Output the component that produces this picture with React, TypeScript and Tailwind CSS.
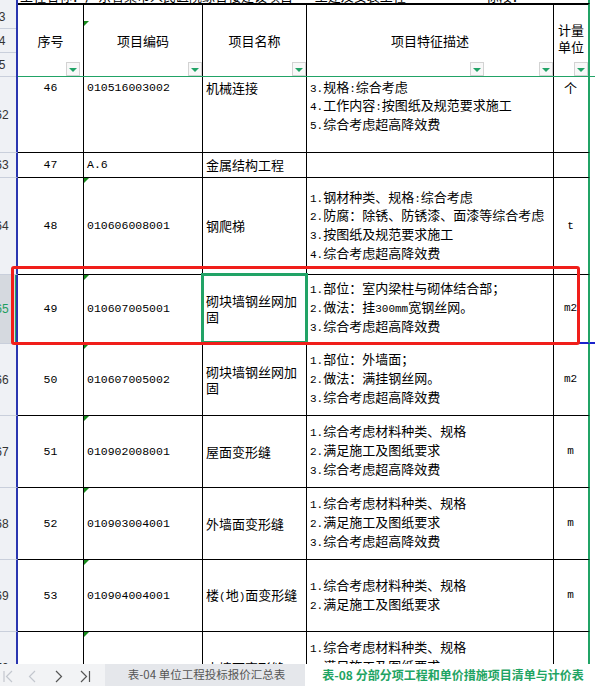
const rows = [
  {
    r: 62,
    no: "46",
    code: "010516003002",
    name: "机械连接",
    desc: ["1.钢筋种类:综合考虑", "2.连接方式:直螺纹连接", "3.规格:综合考虑", "4.工作内容:按图纸及规范要求施工", "5.综合考虑超高降效费"],
    unit: "个",
    h: "h-[129px] -mt-[53px]",
    lab: "pt-[53px]",
    mark: false,
  },
  { r: 63, no: "47", code: "A.6", name: "金属结构工程", desc: [], unit: "", h: "h-[25px]", lab: "", mark: false },
  {
    r: 64,
    no: "48",
    code: "010606008001",
    name: "钢爬梯",
    desc: ["1.钢材种类、规格:综合考虑", "2.防腐：除锈、防锈漆、面漆等综合考虑", "3.按图纸及规范要求施工", "4.综合考虑超高降效费"],
    unit: "t",
    h: "h-[97px]",
    lab: "",
    mark: true,
  },
  {
    r: 65,
    no: "49",
    code: "010607005001",
    name: "砌块墙钢丝网加固",
    desc: ["1.部位：室内梁柱与砌体结合部；", "2.做法：挂300mm宽钢丝网。", "3.综合考虑超高降效费"],
    unit: "m2",
    h: "h-[69px]",
    lab: "",
    mark: true,
  },
  {
    r: 66,
    no: "50",
    code: "010607005002",
    name: "砌块墙钢丝网加固",
    desc: ["1.部位：外墙面；", "2.做法：满挂钢丝网。", "3.综合考虑超高降效费"],
    unit: "m2",
    h: "h-[72px]",
    lab: "",
    mark: true,
  },
  {
    r: 67,
    no: "51",
    code: "010902008001",
    name: "屋面变形缝",
    desc: ["1.综合考虑材料种类、规格", "2.满足施工及图纸要求", "3.综合考虑超高降效费"],
    unit: "m",
    h: "h-[72px]",
    lab: "",
    mark: true,
  },
  {
    r: 68,
    no: "52",
    code: "010903004001",
    name: "外墙面变形缝",
    desc: ["1.综合考虑材料种类、规格", "2.满足施工及图纸要求", "3.综合考虑超高降效费"],
    unit: "m",
    h: "h-[72px]",
    lab: "",
    mark: true,
  },
  {
    r: 69,
    no: "53",
    code: "010904004001",
    name: "楼(地)面变形缝",
    desc: ["1.综合考虑材料种类、规格", "2.满足施工及图纸要求"],
    unit: "m",
    h: "h-[72px]",
    lab: "",
    mark: true,
  },
  {
    r: 70,
    no: "54",
    code: "010903004002",
    name: "内墙面变形缝",
    desc: ["1.综合考虑材料种类、规格", "2.满足施工及图纸要求", "3.综合考虑超高降效费"],
    unit: "m",
    h: "h-[72px]",
    lab: "",
    mark: true,
  },
];

// half-width runs are drawn narrow, the way SimSun renders them
function Txt({ s }: { s: string }) {
  return (
    <>
      {s.split(/([\x20-\x7e]+)/).map((p, i) =>
        /[\x20-\x7e]/.test(p) ? (
          <span key={i} className="font-['Liberation_Mono',monospace] text-[11px]">
            {p}
          </span>
        ) : (
          p
        )
      )}
    </>
  );
}

function Marker() {
  return (
    <span className="absolute left-0 top-0 h-0 w-0 border-r-[5px] border-t-[5px] border-r-transparent border-t-[#178a1c]" />
  );
}

function Filter({ pos }: { pos: string }) {
  return (
    <span className={`absolute bottom-0 flex h-[14px] w-[14px] items-center justify-center border border-[#d3d3d3] bg-[#f8f8f8] ${pos}`}>
      <span className="mt-[1px] h-0 w-0 border-l-[4px] border-r-[4px] border-t-[4px] border-l-transparent border-r-transparent border-t-[#21a366]" />
    </span>
  );
}

function RowLabel({ n, cls }: { n: string; cls?: string }) {
  return <span className={`-ml-[13px] block w-[30px] shrink-0 text-center ${cls ?? ""}`}>{n}</span>;
}

function SheetRow({ row }: { row: (typeof rows)[0] }) {
  const sel = row.r === 65;
  const b = sel ? "border-b-2 border-b-[#1a22cc]" : "border-b border-b-black";
  return (
    <div className={`flex shrink-0 ${row.h}`}>
      <div
        className={`flex w-[18px] shrink-0 items-center overflow-hidden border-b border-r-2 border-b-[#c9cfdb] border-r-[#2a36b0] font-['Liberation_Sans',sans-serif] text-[12px] ${
          sel ? "bg-[#d5d9df] text-[#1e9e5e] shadow-[inset_-1px_0_0_#21a366]" : "bg-[#eff1f5] text-[#333]"
        } ${row.lab}`}
      >
        <RowLabel n={String(row.r)} />
      </div>
      <div className={`flex w-[66px] shrink-0 items-center justify-center border-r border-r-black font-['Liberation_Mono',monospace] text-[11.5px] ${b}`}>
        {row.no}
      </div>
      <div className={`relative flex w-[119px] shrink-0 items-center border-r border-r-black pl-[3px] font-['Liberation_Mono',monospace] text-[11.5px] ${b}`}>
        {row.mark && <Marker />}
        {row.code}
      </div>
      <div className={`relative flex w-[104px] shrink-0 items-center border-r border-r-black pl-[3px] pr-[4px] text-[13px] leading-[16px] ${b}`}>
        <span>
          <Txt s={row.name} />
        </span>
        {sel && <span className="absolute -bottom-[2px] -left-[2px] -right-[2px] -top-[2px] border-[3px] border-[#21a366]" />}
      </div>
      <div className={`flex w-[247px] shrink-0 flex-col justify-center whitespace-nowrap border-r border-r-black pl-[3px] text-[13px] leading-[16.7px] ${b}`}>
        {row.desc.map((d) => (
          <div key={d}>
            <Txt s={d} />
          </div>
        ))}
      </div>
      <div className={`flex w-[36px] shrink-0 items-center justify-center border-r-2 border-r-[#21a366] pr-[1px] text-[13px] ${b}`}>
        <Txt s={row.unit} />
      </div>
      <div className={`flex-1 ${sel ? "border-b-2 border-b-[#1a22cc]" : ""}`} />
    </div>
  );
}

export default function App() {
  return (
    <div className="relative flex h-[686px] w-[595px] flex-col overflow-hidden bg-white font-['Noto_Sans_CJK_SC',sans-serif] text-black">
      {/* frozen header */}
      <div className="flex h-[77px] shrink-0">
        <div className="flex w-[18px] shrink-0 flex-col overflow-hidden border-r-2 border-r-[#2a36b0] bg-[#eff1f5] font-['Liberation_Sans',sans-serif] text-[12px] text-[#333]">
          <div className="h-[5px] shrink-0" />
          <div className="flex h-[24px] shrink-0 items-center border-b border-b-[#c9cfdb]">
            <RowLabel n="3" />
          </div>
          <div className="flex h-[24px] shrink-0 items-center border-b border-b-[#c9cfdb]">
            <RowLabel n="4" />
          </div>
          <div className="flex h-[24px] shrink-0 items-center border-b border-b-[#c9cfdb]">
            <RowLabel n="5" />
          </div>
        </div>
        <div className="flex flex-1 flex-col">
          <div className="flex h-[3px] shrink-0 overflow-hidden">
            <div className="flex w-[570px] shrink-0 gap-[80px] whitespace-nowrap pl-[2px] text-[13px] leading-[16px]">
              <span className="-mt-[12px]">工程名称：广东省某市人民医院综合楼建设项目——土建及安装工程</span>
              <span className="-mt-[12px]">标段：</span>
            </div>
            <div className="w-[2px] shrink-0 bg-[#21a366]" />
          </div>
          <div className="flex h-[73px] shrink-0 text-[13px]">
            <div className="relative flex w-[66px] shrink-0 items-center justify-center border-r border-t-2 border-black">
              序号
              <Filter pos="right-[3px]" />
            </div>
            <div className="relative flex w-[119px] shrink-0 items-center justify-center border-r border-t-2 border-black">
              <span className="absolute left-0 top-[16px] h-0 w-0 border-r-[5px] border-t-[5px] border-r-transparent border-t-[#178a1c]" />
              项目编码
              <Filter pos="right-0" />
            </div>
            <div className="relative flex w-[104px] shrink-0 items-center justify-center border-r border-t-2 border-black">
              项目名称
              <Filter pos="right-0" />
            </div>
            <div className="relative flex w-[247px] shrink-0 items-center justify-center border-r border-t-2 border-black">
              项目特征描述
              <Filter pos="right-[69px]" />
              <Filter pos="right-0" />
            </div>
            <div className="relative flex w-[36px] shrink-0 flex-col items-center justify-center border-r-2 border-t-2 border-r-[#21a366] border-t-black pb-[6px] leading-[17px]">
              <span>计量</span>
              <span>单位</span>
              <Filter pos="right-0" />
            </div>
            <div className="flex-1" />
          </div>
          <div className="h-[1px] shrink-0 bg-[#21a366]" />
        </div>
      </div>

      {/* scrolled body */}
      <div className="flex min-h-0 flex-1 flex-col overflow-hidden">
        {rows.map((row) => (
          <SheetRow key={row.r} row={row} />
        ))}
      </div>

      {/* sheet tabs */}
      <div className="flex h-[22px] shrink-0 items-stretch">
        <div className="w-[105px] shrink-0 bg-[#f2f3f5]">
          <svg width="105" height="22" viewBox="0 0 105 22" fill="none" strokeWidth="1.2">
            <path d="M4 7v11M12 7l-5.5 5.5L12 18" stroke="#c3c7ce" />
            <path d="M35 7l-5.5 5.5L35 18" stroke="#c3c7ce" />
            <path d="M56 7l5.5 5.5L56 18" stroke="#555" />
            <path d="M81 7l5.5 5.5L81 18M89.5 7v11" stroke="#555" />
          </svg>
        </div>
        <div className="flex w-[200px] shrink-0 items-center justify-center bg-[#e5e7eb] pl-[3px] text-[11.5px] text-[#555]">
          表-04 单位工程投标报价汇总表
        </div>
        <div className="flex flex-1 items-center justify-center bg-white pl-[6px] text-[12px] font-bold text-[#1fa463]">
          表-08 分部分项工程和单价措施项目清单与计价表
        </div>
      </div>

      {/* red annotation box */}
      <div className="absolute left-[11px] top-[266px] h-[79px] w-[569px] rounded-[3px] border-[3px] border-[#f01e1a]" />
    </div>
  );
}
